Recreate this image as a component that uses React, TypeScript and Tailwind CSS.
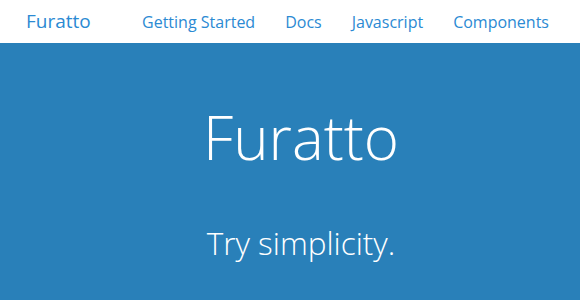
export default function App() {
  return (
    <div className="min-h-[300px] bg-[#2980b9] font-['Open_Sans',sans-serif]">
      <nav className="h-[43px] bg-white flex items-center px-[26px]">
        <a className="text-[19px] text-[#2b8ad3]">Furatto</a>
        <ul className="ml-auto flex items-center gap-[30px] mr-[5px] text-[16px] text-[#2b8ad3]">
          <li>Getting Started</li>
          <li>Docs</li>
          <li>Javascript</li>
          <li>Components</li>
        </ul>
      </nav>
      <section className="flex flex-col items-center pl-[22px] text-white">
        <h1 className="mt-[64px] text-[60px] font-light leading-none">Furatto</h1>
        <p className="mt-[60px] text-[31.5px] font-light leading-none">Try simplicity.</p>
      </section>
    </div>
  );
}
